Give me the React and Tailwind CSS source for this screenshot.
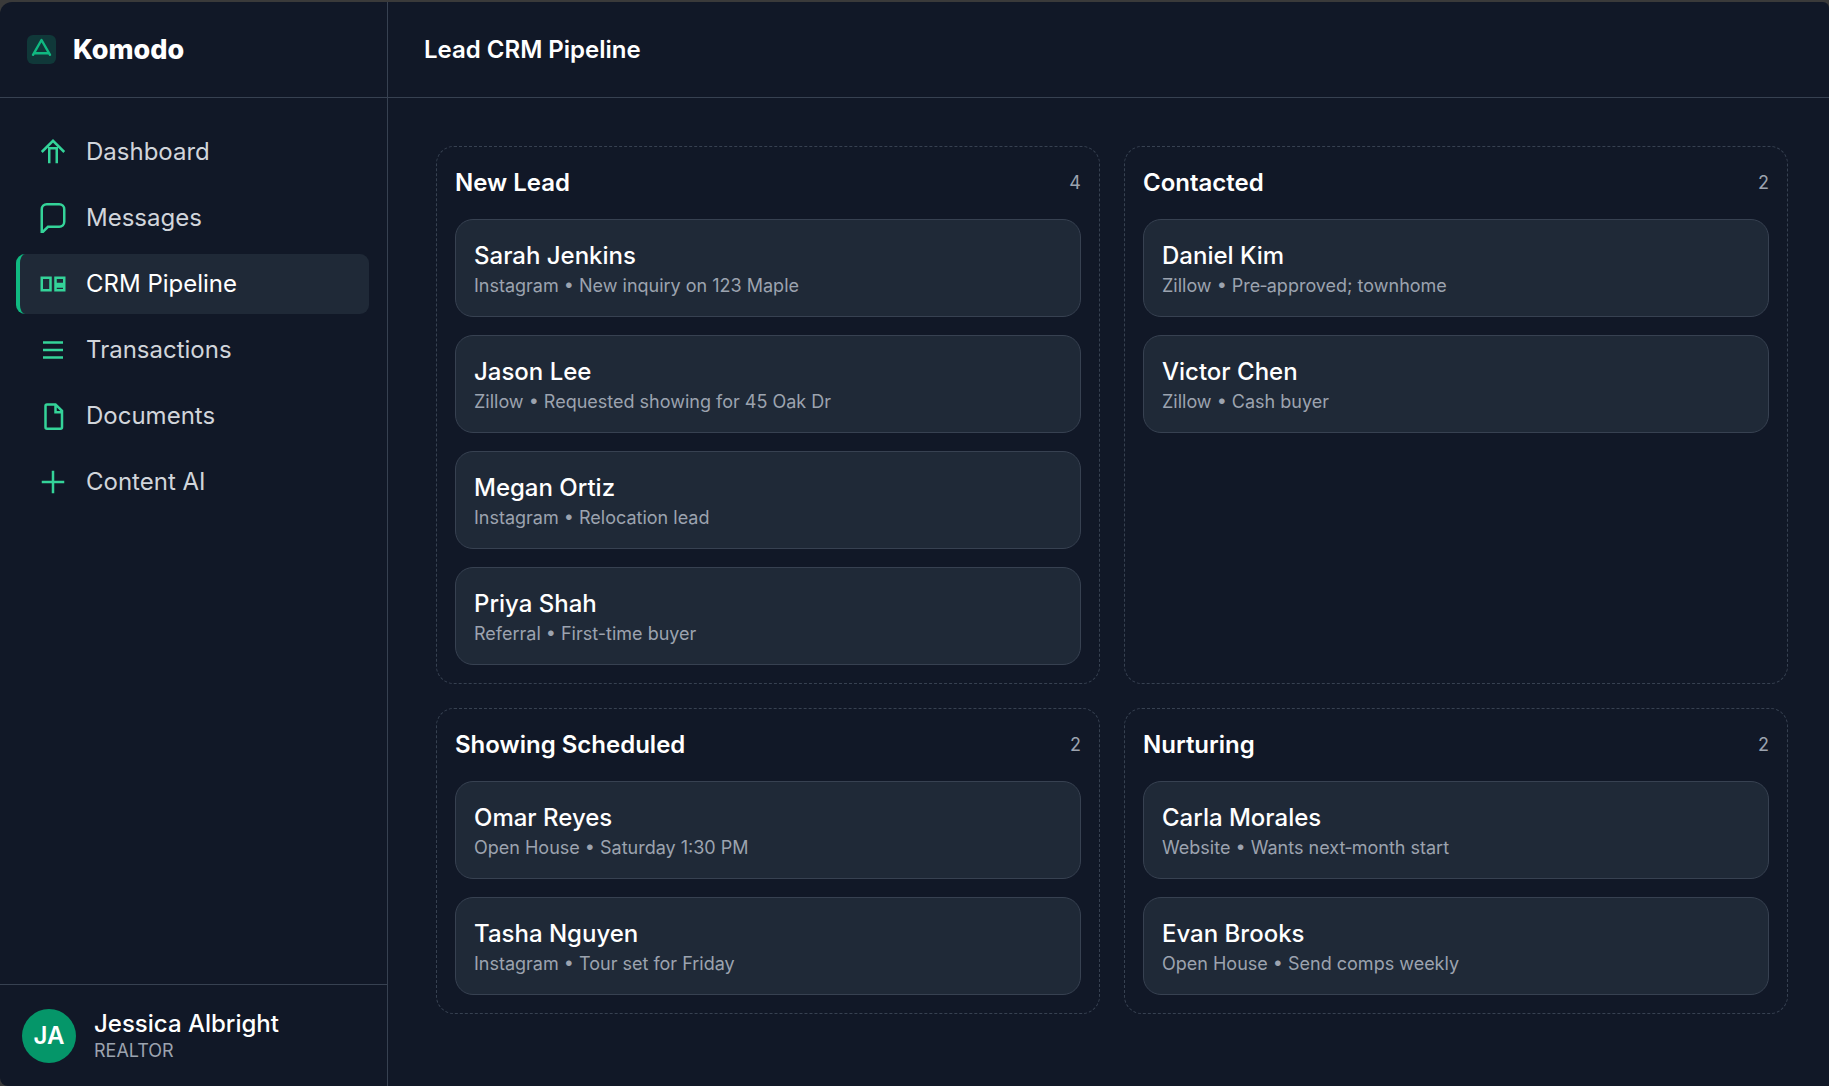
const nav = [
  ["Dashboard", "M3 12l9-9 9 9M9 21V9h6v12"],
  ["Messages", "M21 15a4 4 0 0 1-4 4H8l-5 5V5a4 4 0 0 1 4-4h10a4 4 0 0 1 4 4z"],
  ["CRM Pipeline", "M3 7h7v10H3zM14 7h7v5h-7zM14 14h7v3h-7z"],
  ["Transactions", "M4 6h16M4 12h16M4 18h16"],
  ["Documents", "M14 2.7H7.2a1.2 1.2 0 0 0-1.2 1.2V21a1.2 1.2 0 0 0 1.2 1.2h10.8a1.2 1.2 0 0 0 1.2-1.2V7.9zM14 2.7V8.9h5.2"],
  ["Content AI", "M12 3v18M3 12h18"],
];

const columns = [
  ["New Lead", [
    ["Sarah Jenkins", "Instagram • New inquiry on 123 Maple"],
    ["Jason Lee", "Zillow • Requested showing for 45 Oak Dr"],
    ["Megan Ortiz", "Instagram • Relocation lead"],
    ["Priya Shah", "Referral • First-time buyer"],
  ]],
  ["Contacted", [
    ["Daniel Kim", "Zillow • Pre\u2011approved; townhome"],
    ["Victor Chen", "Zillow • Cash buyer"],
  ]],
  ["Showing Scheduled", [
    ["Omar Reyes", "Open House • Saturday 1:30 PM"],
    ["Tasha Nguyen", "Instagram • Tour set for Friday"],
  ]],
  ["Nurturing", [
    ["Carla Morales", "Website • Wants next\u2011month start"],
    ["Evan Brooks", "Open House • Send comps weekly"],
  ]],
];

function NavItem({ label, path, active }) {
  return (
    <a
      className={
        "flex h-[60px] items-center gap-[18px] rounded-[9px] border-l-4 pl-[18px] text-2xl " +
        (active ? "border-[#10b981] bg-[#1f2937] text-white" : "border-transparent text-[#d1d5db]")
      }
    >
      <svg className="size-[30px] shrink-0 text-[#34d399]" viewBox="0 0 24 24" fill="none" stroke="currentColor" strokeWidth="2">
        <path d={path} />
      </svg>
      {label}
    </a>
  );
}

function Sidebar() {
  return (
    <aside className="flex w-[388px] shrink-0 flex-col border-r border-[#374151]">
      <div className="flex h-24 shrink-0 items-center gap-[17px] border-b border-[#374151] pl-[27px]">
        <div className="flex size-[29px] items-center justify-center rounded-md bg-[#10b981]/20">
          <svg className="size-[29px] text-[#10b981]" viewBox="0 0 29 29" fill="none" stroke="currentColor" strokeWidth="2.4" strokeLinecap="round" strokeLinejoin="round">
            <path d="M6 19.8L14.5 5L23 19.8M7.2 18.3h14.6" />
          </svg>
        </div>
        <span className="pt-0.5 text-[27px] font-extrabold text-white">Komodo</span>
      </div>
      <nav className="flex flex-1 flex-col gap-1.5 pt-6 pr-[18px] pl-4">
        {nav.map(([label, path]) => (
          <NavItem key={label} label={label} path={path} active={label === "CRM Pipeline"} />
        ))}
      </nav>
      <div className="flex h-[102px] shrink-0 items-center gap-[18px] border-t border-[#374151] pl-[22px]">
        <div className="flex size-[54px] items-center justify-center rounded-full bg-[#059669] text-2xl font-semibold text-white">JA</div>
        <div>
          <div className="text-2xl leading-[30px] font-medium text-white">Jessica Albright</div>
          <div className="text-lg leading-6 text-[#9ca3af]">REALTOR</div>
        </div>
      </div>
    </aside>
  );
}

function Column({ title, leads }) {
  return (
    <section className="rounded-[18px] border border-dashed border-[#374151] p-[18px]">
      <div className="mb-[18px] flex h-9 items-center justify-between">
        <h2 className="text-2xl font-semibold text-white">{title}</h2>
        <span className="text-lg text-[#9ca3af]">{leads.length}</span>
      </div>
      <div className="flex flex-col gap-[18px]">
        {leads.map(([name, note]) => (
          <article key={name} className="flex h-[98px] flex-col rounded-[18px] border border-[#374151] bg-[#1f2937] px-[18px] pt-[18px]">
            <h3 className="text-2xl leading-9 font-medium text-white">{name}</h3>
            <p className="text-lg leading-6 text-[#9ca3af]">{note}</p>
          </article>
        ))}
      </div>
    </section>
  );
}

export default function App() {
  return (
    <div className="h-[1086px] overflow-hidden bg-[#3a3a3a] pt-0.5 font-['Inter',sans-serif]">
      <div className="flex h-[1084px] overflow-hidden rounded-tl-xl rounded-tr-md rounded-bl-lg bg-[#111827]">
        <Sidebar />
        <main className="min-w-0 flex-1">
          <header className="flex h-24 items-center border-b border-[#374151] pl-9">
            <h1 className="text-2xl font-semibold text-white">Lead CRM Pipeline</h1>
          </header>
          <div className="grid grid-cols-2 gap-6 pt-12 pr-[41px] pl-12">
            {columns.map(([title, leads]) => (
              <Column key={title} title={title} leads={leads} />
            ))}
          </div>
        </main>
      </div>
    </div>
  );
}
